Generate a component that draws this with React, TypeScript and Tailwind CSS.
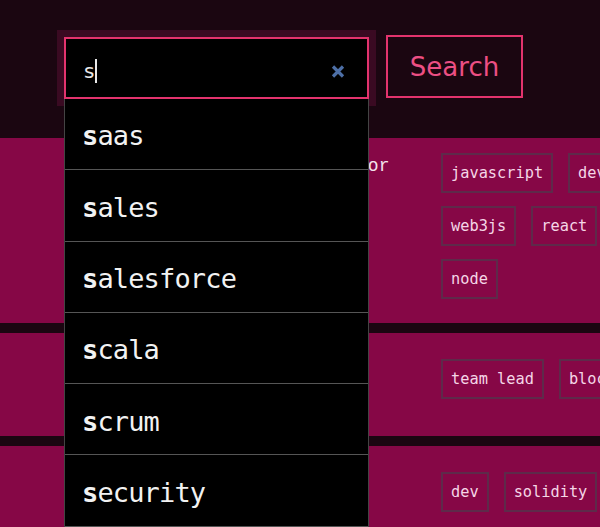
import React from "react";

type Job = {
  title: string;
  tags: string[];
  height: string;
  pad: string;
};

const jobs: Job[] = [
  {
    title: "Senior Solidity Developer or",
    tags: ["javascript", "devops", "web3js", "react", "css", "node"],
    height: "h-[185px]",
    pad: "pt-[15px]",
  },
  {
    title: "",
    tags: ["team lead", "blockchain"],
    height: "h-[103px]",
    pad: "pt-[26px]",
  },
  {
    title: "",
    tags: ["dev", "solidity", "rust"],
    height: "h-[110px]",
    pad: "pt-[26px]",
  },
];

const suggestions = ["saas", "sales", "salesforce", "scala", "scrum", "security"];

function Tag({ label }: { label: string }) {
  return (
    <span className="flex h-[40px] items-center border-2 border-[#5e2a4a] px-[8px] font-['DejaVu_Sans_Mono',monospace] text-[15.3px] text-[#f5d6e6] whitespace-nowrap">
      {label}
    </span>
  );
}

function SearchBox() {
  return (
    <div className="relative mt-[2px] h-[62px] w-[305px] shrink-0 border-2 border-[#e3336d] bg-black shadow-[0_0_0_7px_#3a0a22]">
      <div className="flex h-full items-center pl-[18px] pr-[22px] pt-[6px]">
        <span className="font-['DejaVu_Sans',sans-serif] text-[20px] leading-none text-[#e8e8e8]">s</span>
        <span className="ml-[1px] h-[24px] w-[1.5px] bg-[#e8e8e8]" />
        <span className="flex-1" />
        <svg width="14" height="13" viewBox="0 0 14 13" className="shrink-0">
          <path d="M2 1.5 L12 11.5 M12 1.5 L2 11.5" stroke="#4d6fa6" strokeWidth="3.2" strokeLinecap="butt" />
        </svg>
      </div>
      <div className="absolute left-[-2px] top-[calc(100%+2px)] z-20 w-[305px] border-x border-[#444] bg-black">
        {suggestions.map((s) => (
          <div
            key={s}
            className="flex h-[71.3px] items-center border-b border-[#555] pl-[17px] pt-[5px] font-['DejaVu_Sans_Mono',monospace] text-[27px] tracking-[-0.85px] text-[#f2f2f2]"
          >
            <span className="font-bold">{s[0]}</span>
            <span>{s.slice(1)}</span>
          </div>
        ))}
      </div>
    </div>
  );
}

export default function App() {
  return (
    <div className="min-h-screen w-full overflow-hidden bg-[#1b0611]">
      <div className="relative z-10 flex h-[138px] items-start pl-[64px] pt-[35px]">
        <SearchBox />
        <button className="ml-[17px] flex h-[63px] w-[137px] shrink-0 items-center justify-center border-2 border-[#e3336d] pt-[2px] font-['DejaVu_Sans',sans-serif] text-[26px] text-[#ec4f84]">
          Search
        </button>
      </div>
      <div className="flex flex-col gap-[10px]">
        {jobs.map((job, i) => (
          <div key={i} className={`flex w-[700px] bg-[#860746] ${job.height} ${job.pad}`}>
            <div className="w-[441px] shrink-0 pl-[87px] font-['Liberation_Mono',monospace] text-[18px] leading-[27px] text-[#f3e3ec]">
              <div className="whitespace-nowrap">{job.title}</div>
            </div>
            <div className="flex w-[240px] shrink-0 flex-wrap content-start gap-x-[15px] gap-y-[13px]">
              {job.tags.map((t) => (
                <Tag key={t} label={t} />
              ))}
            </div>
          </div>
        ))}
      </div>
    </div>
  );
}
